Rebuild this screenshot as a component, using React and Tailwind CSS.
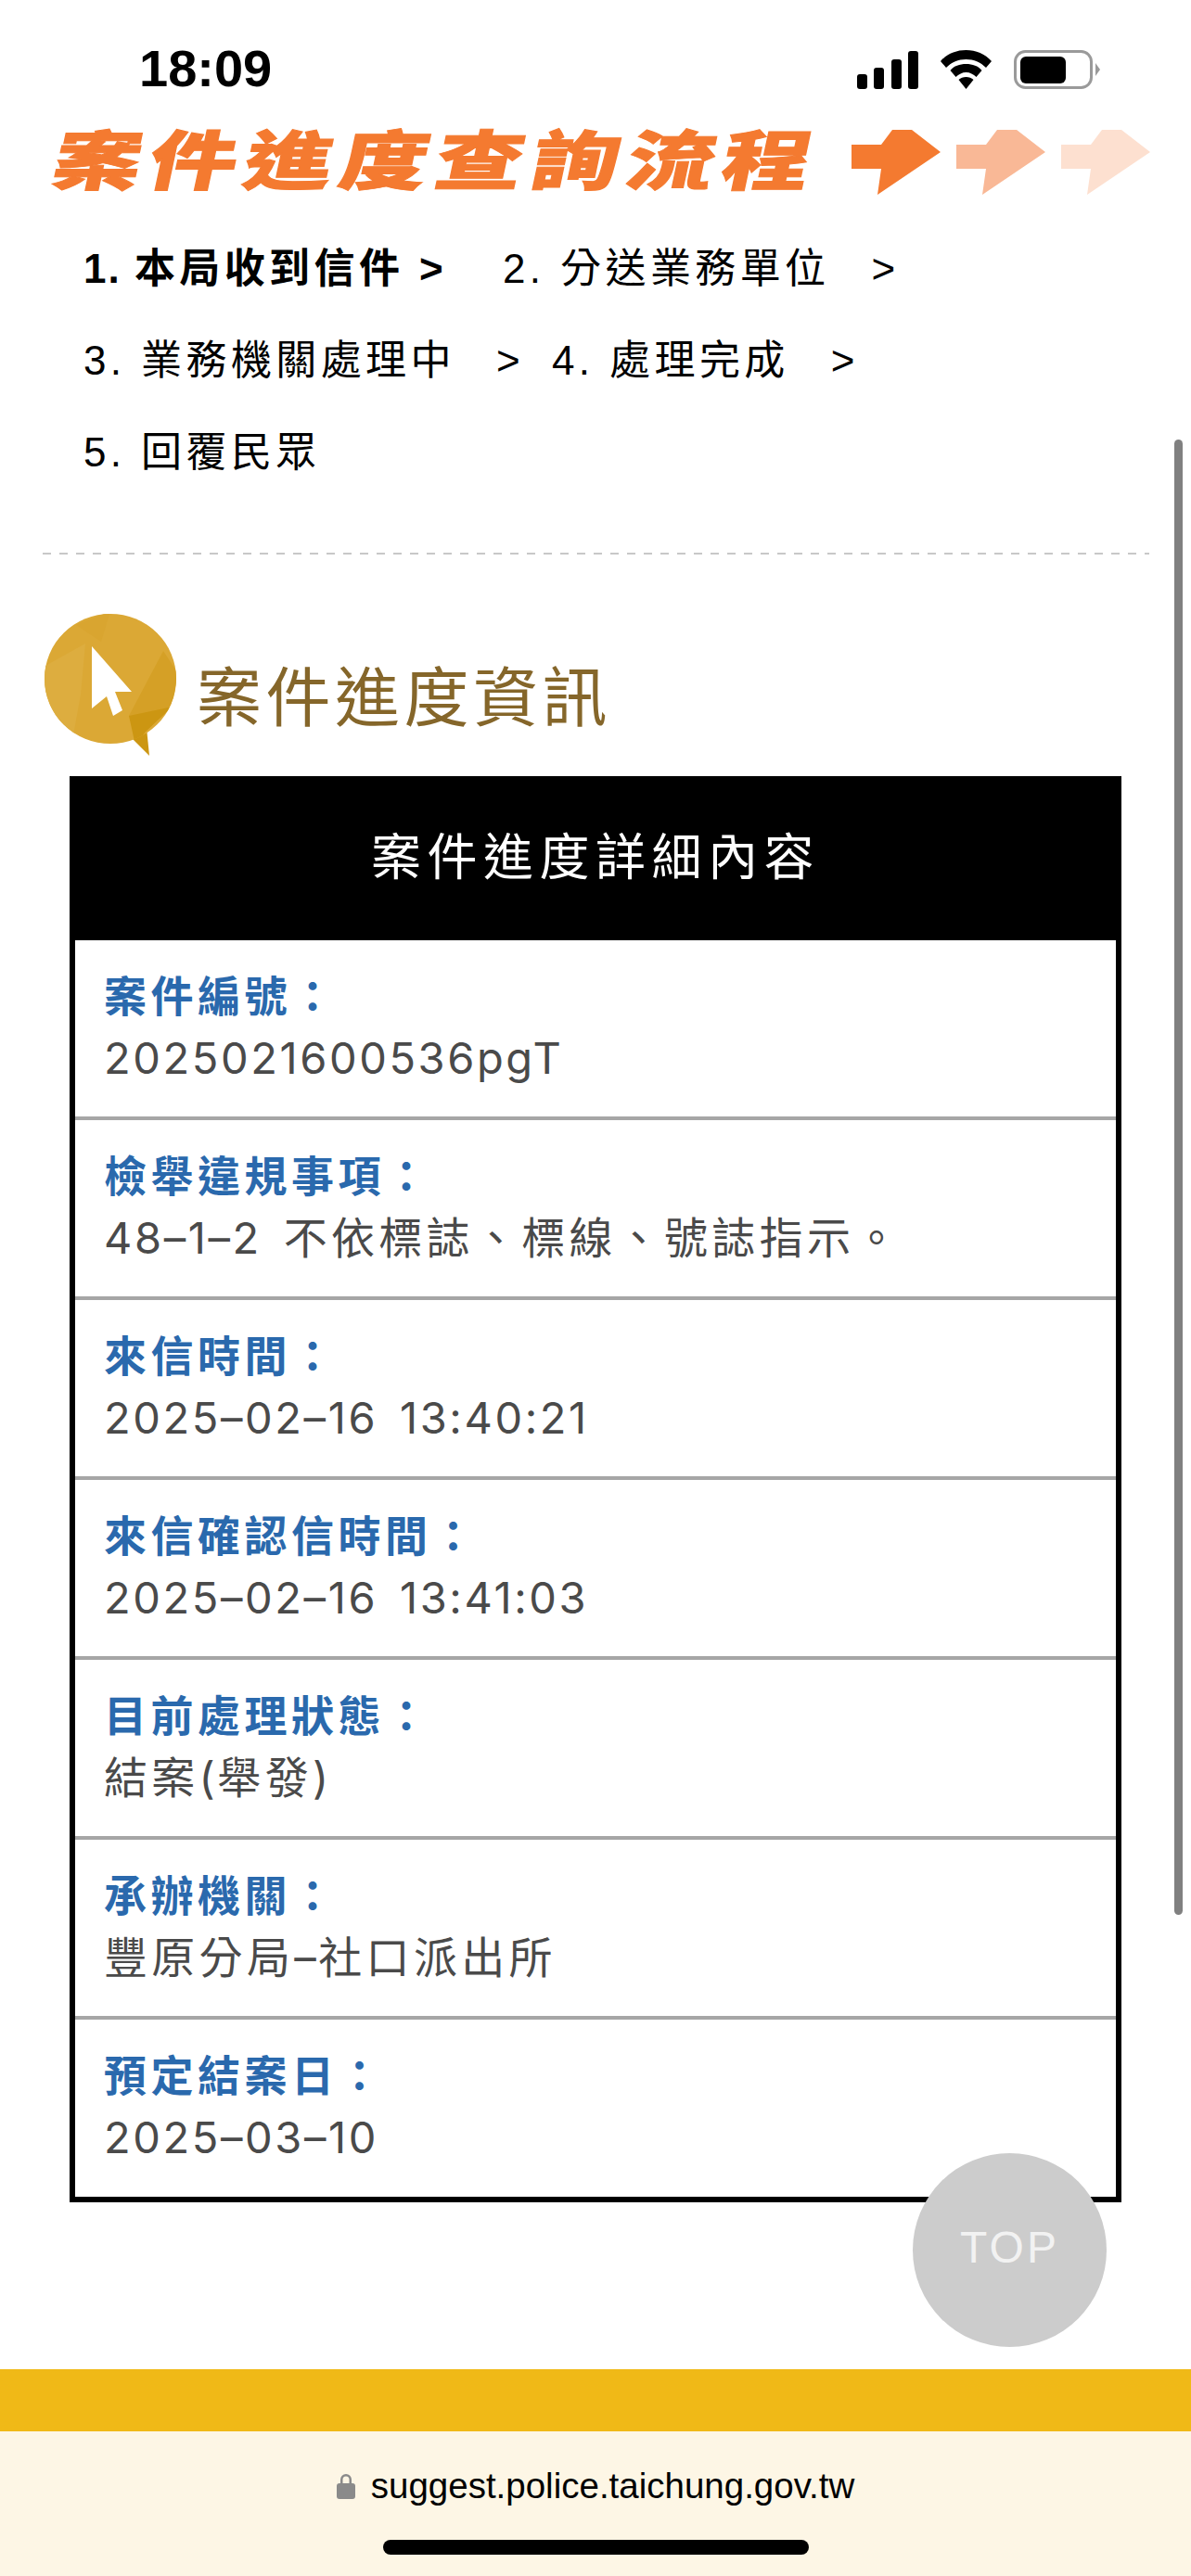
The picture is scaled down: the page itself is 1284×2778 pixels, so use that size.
function Cjk({ children }) {
  return <span className="tracking-[4.3px]">{children}</span>;
}

const rows = [
  { label: '案件編號：', value: '2025021600536pgT' },
  {
    label: '檢舉違規事項：',
    value: (
      <>
        48–1–2 <Cjk>不依標誌、標線、號誌指示。</Cjk>
      </>
    ),
  },
  { label: '來信時間：', value: '2025–02–16 13:40:21' },
  { label: '來信確認信時間：', value: '2025–02–16 13:41:03' },
  {
    label: '目前處理狀態：',
    value: (
      <>
        <Cjk>結案</Cjk>(<Cjk>舉發</Cjk>)
      </>
    ),
  },
  {
    label: '承辦機關：',
    value: (
      <>
        <Cjk>豐原分局</Cjk>–<Cjk>社口派出所</Cjk>
      </>
    ),
  },
  { label: '預定結案日：', value: '2025–03–10' },
];

const bannerChars = ['案', '件', '進', '度', '查', '詢', '流', '程'];

function SignalIcon() {
  return (
    <svg width="66" height="41" viewBox="0 0 66 41" fill="#000">
      <rect x="0" y="25" width="11" height="16" rx="3" />
      <rect x="18" y="18" width="11" height="23" rx="3" />
      <rect x="37" y="9" width="11" height="32" rx="3" />
      <rect x="55" y="0" width="11" height="41" rx="3" />
    </svg>
  );
}

function WifiIcon() {
  return (
    <svg width="57" height="42" viewBox="0 0 57 42" fill="#000">
      <path d="M28.5 0C18 0 8 4 1 12l6 7C13 13 20 10 28.5 10S44 13 50 19l6-7C49 4 39 0 28.5 0z" />
      <path d="M28.5 15c-7 0-13 2-17 7l6 7c3-3 7-5 11-5s8 2 11 5l6-7c-4-5-10-7-17-7z" />
      <path d="M28.5 29c-3 0-6 1-8 3l8 10 8-10c-2-2-5-3-8-3z" />
    </svg>
  );
}

function BatteryIcon() {
  return (
    <svg width="93" height="42" viewBox="0 0 93 42">
      <rect x="1.5" y="1.5" width="82" height="39" rx="11" fill="none" stroke="#9a9a9a" strokeWidth="3" />
      <rect x="7" y="7" width="49" height="29" rx="6" fill="#000" />
      <path d="M88 14l5 7-5 7z" fill="#9a9a9a" />
    </svg>
  );
}

function BannerArrow({ color }) {
  return (
    <svg width="98" height="70" viewBox="0 0 98 70" fill={color}>
      <polygon points="0,16 32,16 44,0 65,0 96,24 28,70 32,42 0,42" />
    </svg>
  );
}

function CursorBadge() {
  return (
    <svg width="146" height="158" viewBox="0 0 146 158">
      <defs>
        <clipPath id="badge">
          <ellipse cx="72" cy="73" rx="71" ry="70" />
        </clipPath>
      </defs>
      <polygon points="96,138 114,156 111,126" fill="#cc9612" />
      <ellipse cx="72" cy="73" rx="71" ry="70" fill="#dba835" />
      <g clipPath="url(#badge)">
        <polygon points="0,60 45,35 40,90 30,145 0,110" fill="#ddad3f" />
        <polygon points="35,15 72,0 62,33" fill="#d9a530" />
        <polygon points="92,113 129,43 145,67 139,100 110,130" fill="#d5a026" />
        <polygon points="92,113 139,103 110,130 99,145" fill="#cc9612" />
      </g>
      <polygon points="52,38 95,87 77,87 85,107 75,113 68,92 52,105" fill="#fff" />
    </svg>
  );
}

function ProgressRow({ children }) {
  return <div className="flex items-center h-[99px]">{children}</div>;
}

function InfoRow({ label, value, last }) {
  return (
    <div className={`pl-[31px] pt-[28px] ${last ? 'h-[191px]' : 'h-[194px] border-b-4 border-[#a6a6a6]'}`}>
      <div className="h-[66px] leading-[66px] text-[46px] font-bold tracking-[4.5px] text-[#2a69ad]">{label}</div>
      <div className="h-[66px] leading-[66px] text-[47px] tracking-[2.6px] [word-spacing:8px] text-[#4a4a4a] whitespace-nowrap font-['Inter','Noto_Sans_CJK_TC',sans-serif]">
        {value}
      </div>
    </div>
  );
}

export default function App() {
  return (
    <div className="relative h-[2778px] w-[1284px] overflow-hidden bg-white flex flex-col font-['Liberation_Sans','Noto_Sans_CJK_TC',sans-serif]">
      <div className="h-[130px] flex items-end justify-between pl-[150px] pr-[98px] pb-[34px]">
        <span className="text-[56px] leading-[56px] font-bold text-black translate-y-[6px]">18:09</span>
        <div className="flex items-end gap-[23px]">
          <SignalIcon />
          <WifiIcon />
          <BatteryIcon />
        </div>
      </div>

      <div className="h-[110px] pl-[54px] flex items-start pt-[10px]">
        <div className="flex w-[826px] h-[70px] -skew-x-12">
          {bannerChars.map((c) => (
            <span
              key={c}
              className="w-[103px] h-[70px] flex items-center justify-center text-[70px] leading-[70px] font-black text-[#f47a30] scale-x-[1.35] [-webkit-text-stroke:1px_#f47a30]"
            >
              {c}
            </span>
          ))}
        </div>
        <div className="flex ml-[38px] gap-[15px]">
          <BannerArrow color="#f47a30" />
          <BannerArrow color="#f9b896" />
          <BannerArrow color="#fde0d0" />
        </div>
      </div>

      <div className="pl-[90px] text-[44px] tracking-[4.4px] text-black">
        <ProgressRow>
          <span className="font-bold w-[452px] whitespace-nowrap">
            <span className="tracking-[2px]">1. </span>本局收到信件 &gt;
          </span>
          <span className="whitespace-nowrap">2. 分送業務單位</span>
          <span className="ml-[45px]">&gt;</span>
        </ProgressRow>
        <ProgressRow>
          <span className="w-[445px] whitespace-nowrap">3. 業務機關處理中</span>
          <span className="w-[60px]">&gt;</span>
          <span className="whitespace-nowrap">4. 處理完成</span>
          <span className="ml-[45px]">&gt;</span>
        </ProgressRow>
        <ProgressRow>
          <span className="whitespace-nowrap">5. 回覆民眾</span>
        </ProgressRow>
      </div>

      <div className="ml-[46px] mt-[59px] w-[1193px] h-[2px] shrink-0 bg-[repeating-linear-gradient(90deg,#c8c8c8_0,#c8c8c8_9px,transparent_9px,transparent_18px)]" />

      <div className="flex items-start pl-[47px] mt-[61px] h-[178px]">
        <CursorBadge />
        <span className="ml-[19px] mt-[55px] text-[70px] leading-[80px] tracking-[4.5px] text-[#85662a] whitespace-nowrap">
          案件進度資訊
        </span>
      </div>

      <div className="ml-[75px] w-[1134px] border-[6px] border-black">
        <div className="h-[171px] pb-[6px] bg-black flex items-center justify-center text-white text-[54px] tracking-[6.5px]">
          案件進度詳細內容
        </div>
        {rows.map((row, i) => (
          <InfoRow key={row.label} label={row.label} value={row.value} last={i === rows.length - 1} />
        ))}
      </div>

      <div className="mt-auto h-[67px] bg-[#f0b917]" />
      <div className="h-[156px] bg-[#fdf6e5] flex flex-col items-center">
        <div className="mt-[38px] flex items-center gap-[17px] text-[38.5px] leading-[42px] text-black">
          <svg width="20" height="28" viewBox="0 0 20 28" fill="#8a8a8a">
            <path d="M4 12V7a6 6 0 0 1 12 0v5h-2.5V7a3.5 3.5 0 0 0-7 0v5z" />
            <rect x="0" y="11" width="20" height="17" rx="3" />
          </svg>
          <span>suggest.police.taichung.gov.tw</span>
        </div>
        <div className="mt-[37px] w-[459px] h-[16px] rounded-full bg-black" />
      </div>

      <div className="absolute left-[1266px] top-[474px] w-[9px] h-[1591px] rounded-full bg-[#808080]" />
      <div className="absolute left-[984px] top-[2322px] w-[209px] h-[209px] rounded-full bg-[#cccccc] flex items-center justify-center">
        <span className="text-[#f2f2f2] text-[48px] tracking-[3px] font-light -translate-y-[3px]">TOP</span>
      </div>
    </div>
  );
}
